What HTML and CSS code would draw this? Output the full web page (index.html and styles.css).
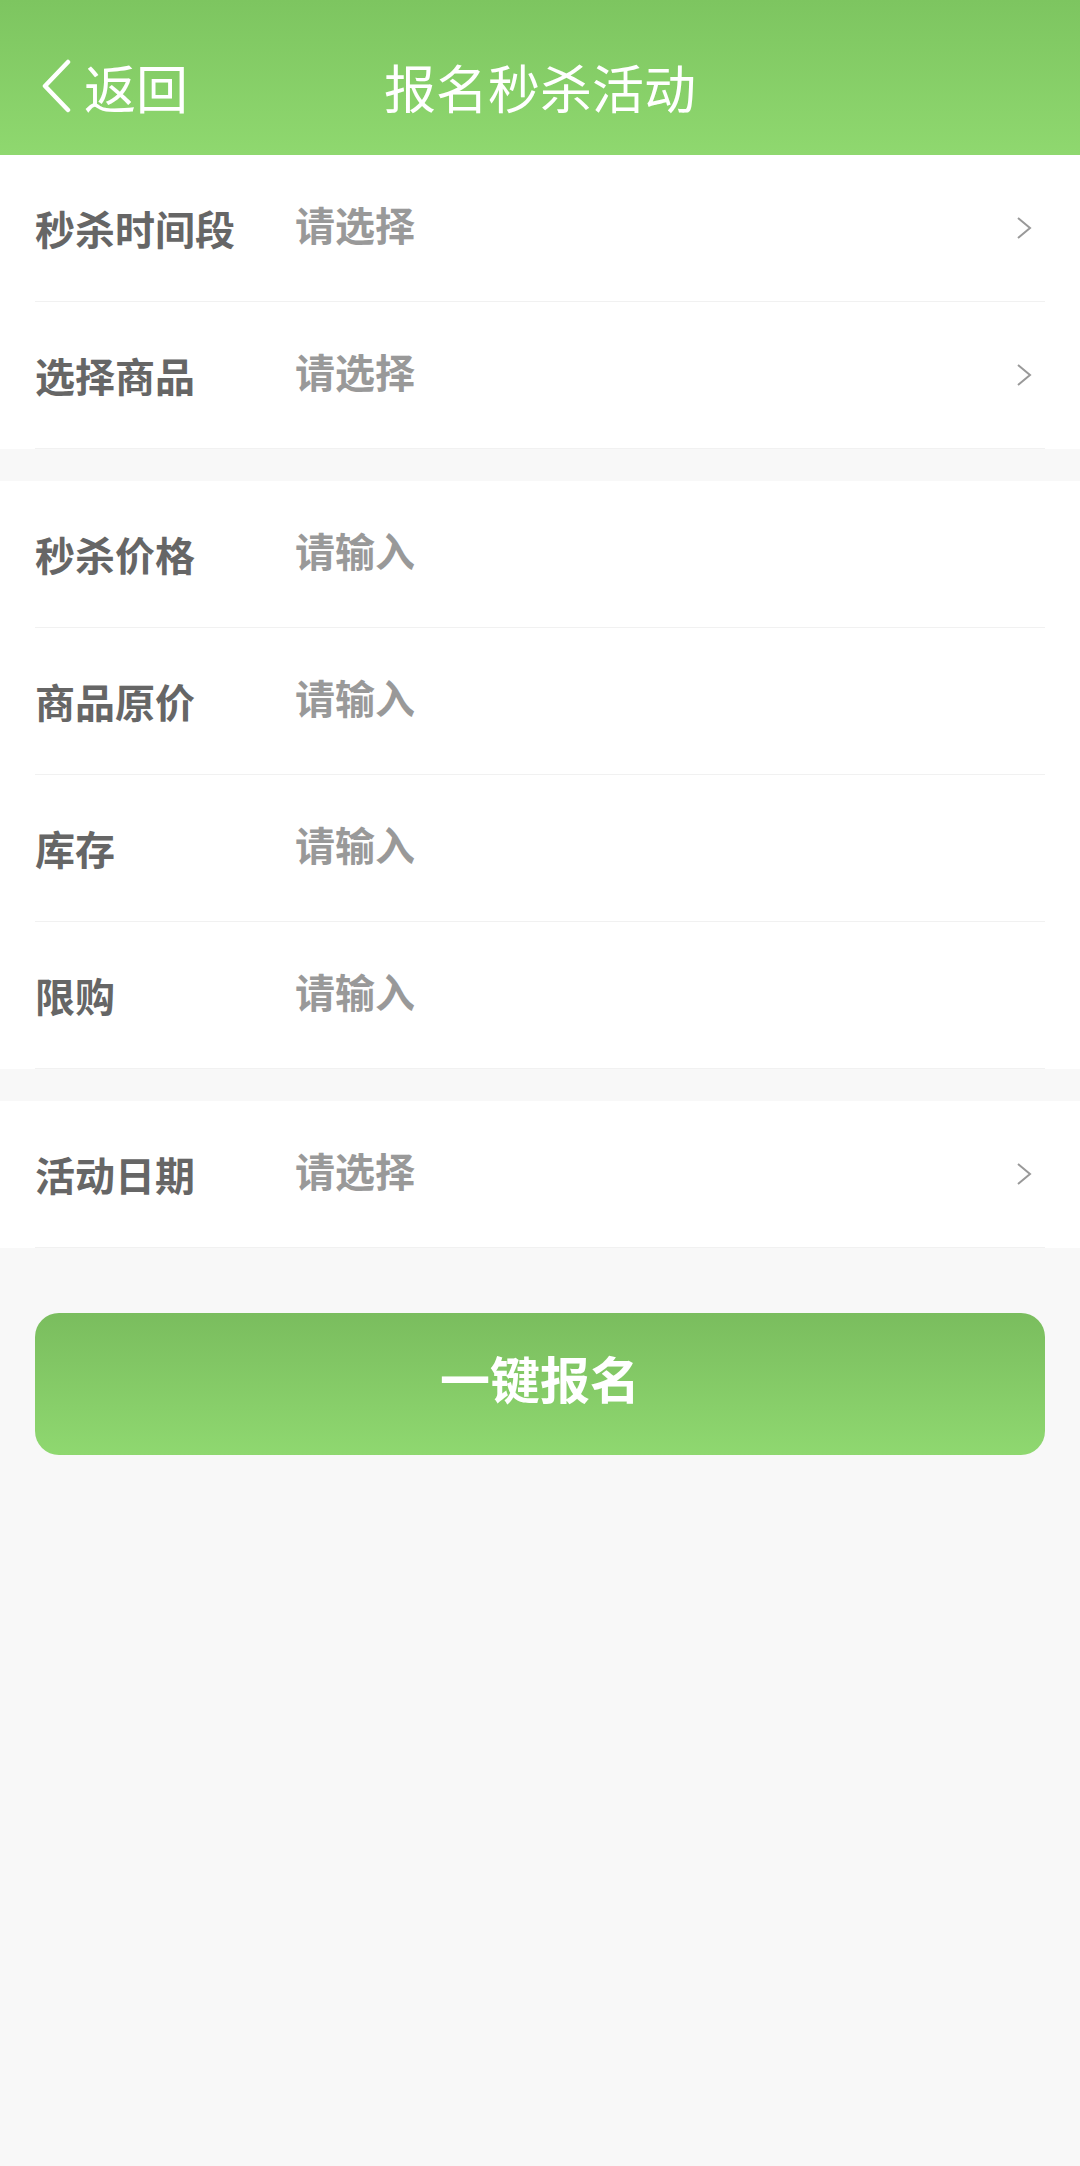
FILE: index.html
```html
<!DOCTYPE html>
<html lang="zh">
<head>
<meta charset="utf-8">
<link rel="stylesheet" href="styles.css">
</head>
<body>
<header class="topbar">
  <div class="back">
    <svg class="back-icon" width="32" height="54" viewBox="0 0 32 54"><polyline points="28,3 5,27 28,51" fill="none" stroke="#fff" stroke-width="4.5" stroke-linecap="round" stroke-linejoin="round"/></svg>
    <span class="back-text">返回</span>
  </div>
  <div class="title">报名秒杀活动</div>
</header>

<section class="group">
  <div class="row"><span class="label">秒杀时间段</span><span class="value">请选择</span><svg class="arrow" width="16" height="24" viewBox="0 0 16 24"><polyline points="2,2 14,12 2,22" fill="none" stroke="#999" stroke-width="2"/></svg></div>
  <div class="row"><span class="label">选择商品</span><span class="value">请选择</span><svg class="arrow" width="16" height="24" viewBox="0 0 16 24"><polyline points="2,2 14,12 2,22" fill="none" stroke="#999" stroke-width="2"/></svg></div>
</section>

<section class="group">
  <div class="row"><span class="label">秒杀价格</span><span class="value">请输入</span></div>
  <div class="row"><span class="label">商品原价</span><span class="value">请输入</span></div>
  <div class="row"><span class="label">库存</span><span class="value">请输入</span></div>
  <div class="row"><span class="label">限购</span><span class="value">请输入</span></div>
</section>

<section class="group">
  <div class="row"><span class="label">活动日期</span><span class="value">请选择</span><svg class="arrow" width="16" height="24" viewBox="0 0 16 24"><polyline points="2,2 14,12 2,22" fill="none" stroke="#999" stroke-width="2"/></svg></div>
</section>

<div class="btn-wrap">
  <div class="submit">一键报名</div>
</div>
</body>
</html>
```

FILE: styles.css
```css
html, body {
  margin: 0;
  padding: 0;
}
body {
  background: #f8f8f8;
  min-height: 2166px;
  font-family: "Noto Sans CJK SC", "Noto Sans", sans-serif;
}
.topbar {
  height: 155px;
  box-sizing: border-box;
  padding-top: 18px;
  background: linear-gradient(to bottom, #7dc560, #8fd86f);
  position: relative;
  display: flex;
  align-items: center;
  color: #fff;
}
.back {
  display: flex;
  align-items: center;
  padding-left: 40px;
  gap: 12px;
}
.back-icon {
  display: block;
  margin-top: -2px;
}
.back-text {
  font-size: 52px;
  line-height: 1;
}
.title {
  position: absolute;
  left: 0;
  right: 0;
  top: 18px;
  bottom: 0;
  display: flex;
  align-items: center;
  justify-content: center;
  font-size: 52px;
  line-height: 1;
  pointer-events: none;
}
.group {
  background: #fff;
  margin-bottom: 32px;
}
.row {
  height: 146px;
  margin: 0 35px;
  border-bottom: 1px solid #f1f1f1;
  display: flex;
  align-items: center;
}
.label {
  width: 260px;
  flex: none;
  font-size: 40px;
  font-weight: bold;
  color: #666;
  line-height: 1;
}
.value {
  flex: 1;
  font-size: 40px;
  font-weight: bold;
  color: #999;
  line-height: 1;
  margin-bottom: 9px;
}
.arrow {
  display: block;
  margin-right: 13px;
}
.btn-wrap {
  padding: 33px 35px 0;
}
.submit {
  height: 142px;
  box-sizing: border-box;
  padding-bottom: 14px;
  border-radius: 24px;
  background: linear-gradient(to bottom, #7abd5e, #8fd870);
  color: #fff;
  font-size: 50px;
  font-weight: bold;
  display: flex;
  align-items: center;
  justify-content: center;
}
```
